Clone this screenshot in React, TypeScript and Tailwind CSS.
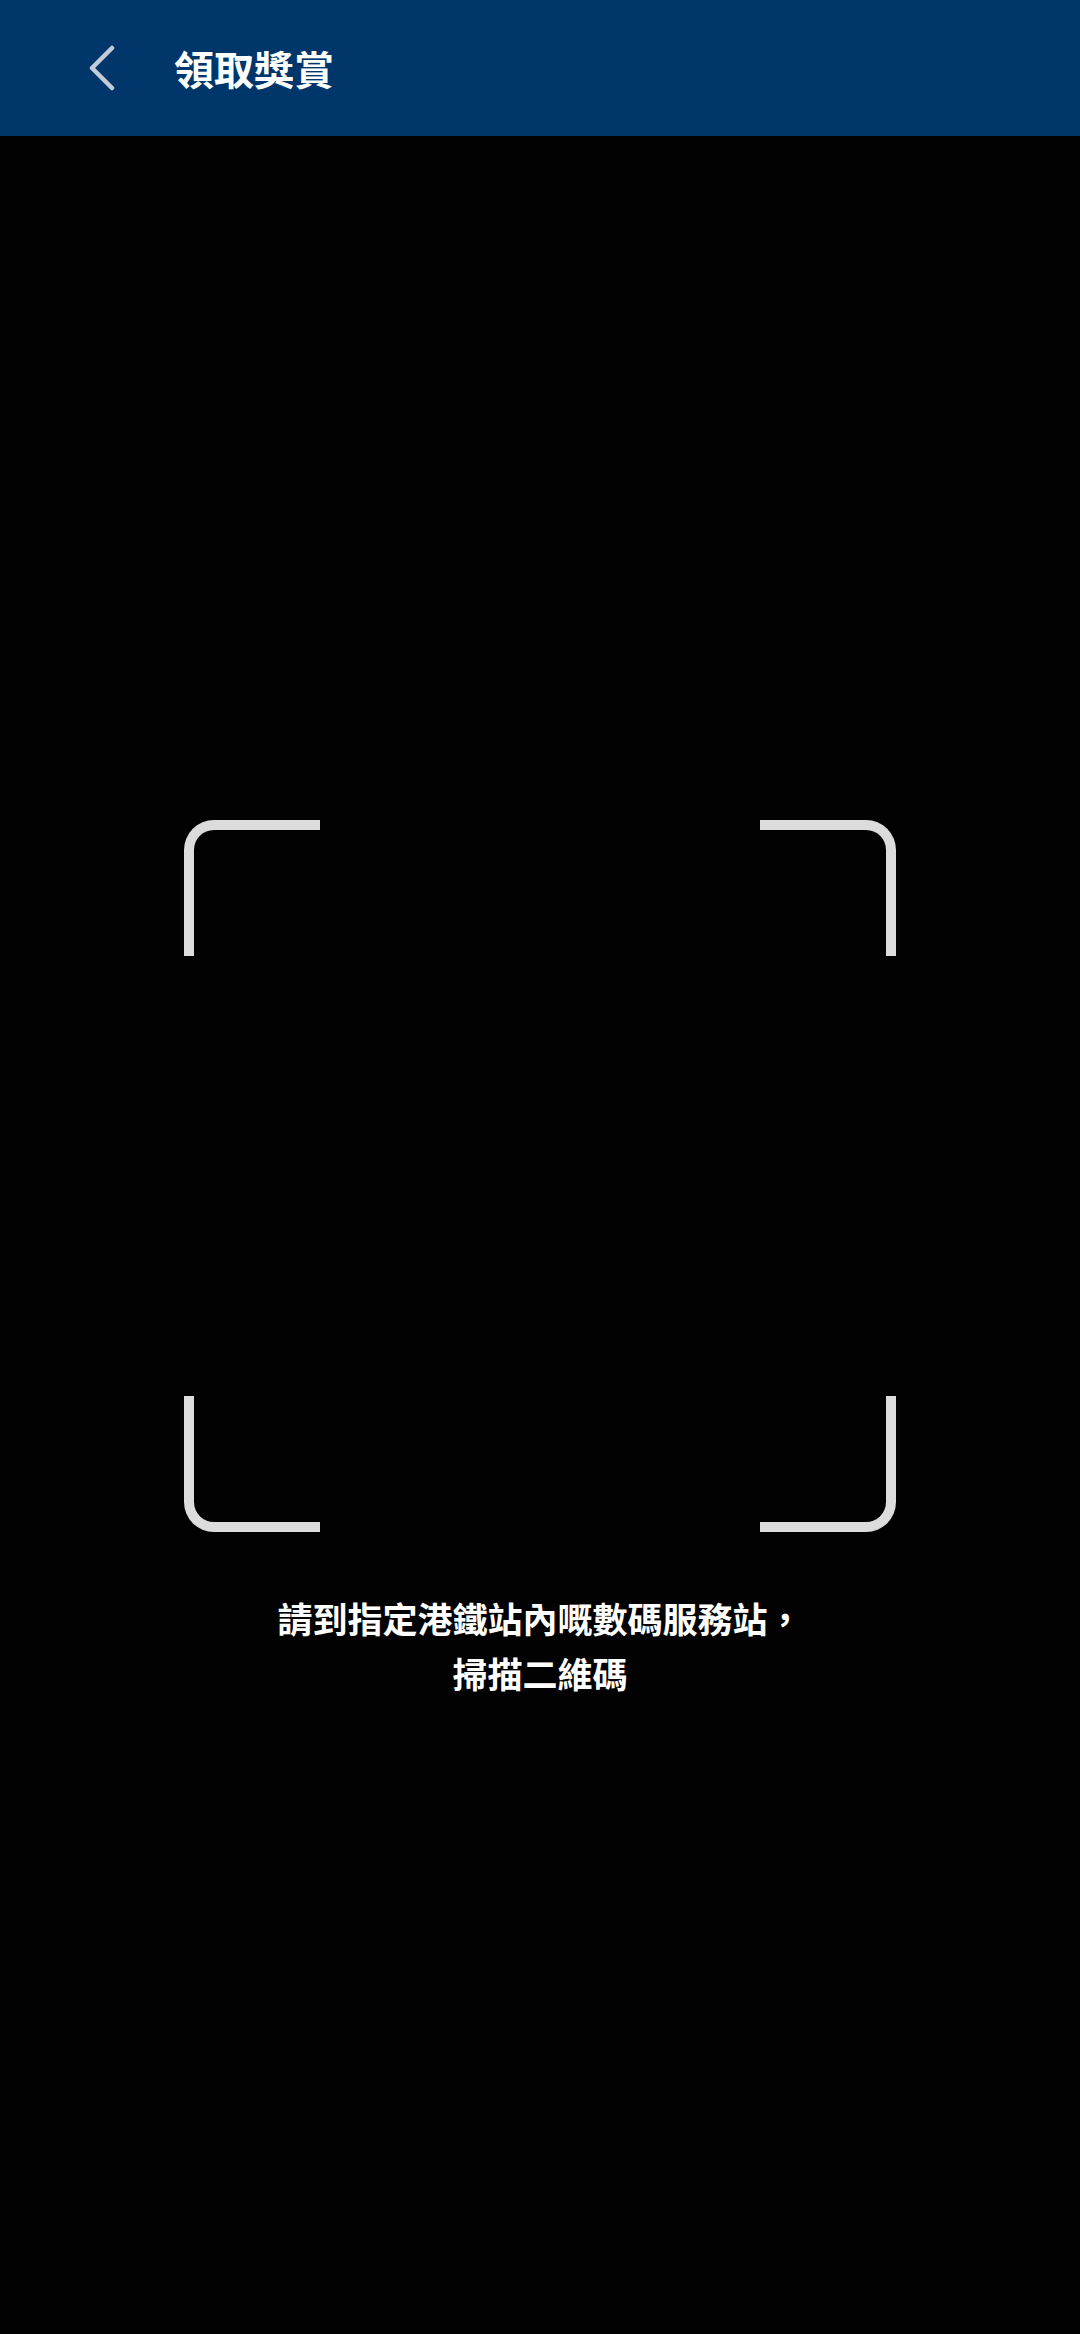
export default function App() {
  const font = { fontFamily: '"Noto Sans CJK TC", "Noto Sans", sans-serif' };

  return (
    <div className="flex min-h-[2334px] w-[1080px] flex-col bg-[#020202]" style={font}>
      <header className="flex h-[136px] items-center bg-[#00366a]">
        <button className="ml-[86px] flex h-[48px] w-[32px] items-center justify-center">
          <svg width="30" height="46" viewBox="0 0 30 46" fill="none">
            <polyline
              points="25,3 5,23 25,43"
              stroke="#c3ccd9"
              strokeWidth="4.5"
              strokeLinecap="round"
              strokeLinejoin="round"
            />
          </svg>
        </button>
        <h1 className="ml-[56px] text-[40px] font-bold leading-none text-white">領取獎賞</h1>
      </header>

      <main className="flex flex-1 flex-col items-center pt-[684px]">
        <div className="flex h-[712px] w-[712px] flex-col justify-between">
          <div className="flex justify-between">
            <div className="h-[136px] w-[136px] rounded-tl-[30px] border-l-[10px] border-t-[10px] border-[#dcdcdc]" />
            <div className="h-[136px] w-[136px] rounded-tr-[30px] border-r-[10px] border-t-[10px] border-[#dcdcdc]" />
          </div>
          <div className="flex justify-between">
            <div className="h-[136px] w-[136px] rounded-bl-[30px] border-b-[10px] border-l-[10px] border-[#dcdcdc]" />
            <div className="h-[136px] w-[136px] rounded-br-[30px] border-b-[10px] border-r-[10px] border-[#dcdcdc]" />
          </div>
        </div>

        <p className="mt-[58px] text-center text-[35px] font-bold leading-[55px] text-white">
          請到指定港鐵站內嘅數碼服務站，
          <br />
          掃描二維碼
        </p>
      </main>
    </div>
  );
}
